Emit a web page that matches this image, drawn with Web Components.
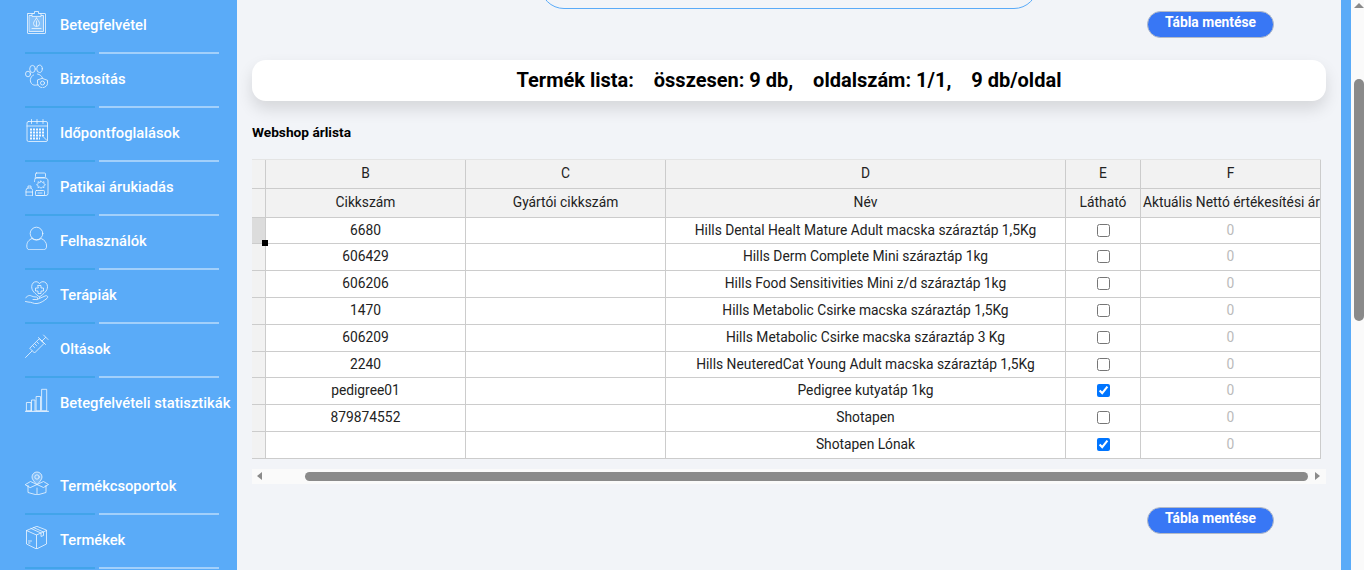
<!DOCTYPE html>
<html lang="hu"><head><meta charset="utf-8"><title>Webshop árlista</title>
<style>
html,body{margin:0;padding:0;height:570px;overflow:hidden;background:#f2f4f8;font-family:Roboto,"Liberation Sans",sans-serif}
vet-app{height:570px}
</style></head><body>
<template id="icons">
<svg data-i="clip" viewBox="0 0 24 24"><rect x="2.500" y="3.500" width="18" height="20" rx=".5"/><rect x="4.500" y="5.500" width="14" height="16" fill="rgba(255,255,255,.28)"/><path d="M7 6V3.500h2.500V1.500h4v2H16V6z" fill="#5aabf8"/><path d="M11.500 8c1 2 3 3.500 3 5.500a3 3 0 0 1-6 0c0-2 2-3.500 3-5.500zM11.500 11v5M7 18.500h9"/></svg>
<svg data-i="paw" viewBox="0 0 24 24"><ellipse cx="3" cy="10" rx="2.500" ry="2.800"/><ellipse cx="7.500" cy="5" rx="2.800" ry="3.600"/><ellipse cx="14.500" cy="4.800" rx="2.800" ry="3.700"/><path d="M8.500 11C5 12.500 4 18 7.500 20.500c2 1.200 3.500 .5 5.500 .3M12.500 10c2.500 .5 4 1.700 5 4"/><path d="M17.500 14.500l5 1.800v3c0 2.500-2 3.700-5 4.700-3-1-5-2.200-5-4.700v-3z"/><circle cx="17.500" cy="19" r="2"/></svg>
<svg data-i="cal" viewBox="0 0 24 24"><rect x="2" y="3.500" width="20.500" height="20" rx="1.500"/><path d="M2 8h20.500M6.500 1.500v4M12 1.500v4M18 1.500v4"/><path d="M5 11.500h14.500M5 14.500h14.500M5 17.500h14.500M5 20.500h10" stroke-width="1.800" stroke-dasharray="2 1" stroke-linecap="butt"/><path d="M18.500 19l3 3"/></svg>
<svg data-i="pills" viewBox="0 0 24 24"><path d="M10 6h11c1.500 .5 2 1.500 2 3v12.500a2 2 0 0 1-2 2H11"/><rect x="10.500" y="1" width="10" height="4.500" rx="1"/><path d="M9.500 9.500c0-1.500 .5-3.500 1-3.500"/><path d="M16 9l1.200 1.500 1.800-.8-.2 2 1.700 1-1.700 1 .2 2-1.800-.8-1.200 1.500-1.200-1.500-1.800 .8 .2-2-1.700-1 1.700-1-.2-2 1.800 .8z" stroke-width=".7"/><rect x="10.500" y="18.500" width="9" height="5" rx="1"/><path d="M13 21h4M1 23.500v-5a2.500 2.500 0 0 1 2.500-2.500h1A2.500 2.500 0 0 1 7.500 18.500v5zM1 20h6.500M3 16v-2h3v2"/></svg>
<svg data-i="user" viewBox="0 0 24 24"><circle cx="11.500" cy="7.500" r="6.300"/><path d="M7 12.500C3.500 14 1.800 16.500 1.800 20c0 2.700 1 3.700 3 3.700h13.500c2 0 3.300-1 3.300-3.700 0-3.500-2-6-5.500-7.500-1.300 1-3 1.500-4.500 1.500S8.300 13.500 7 12.500z"/></svg>
<svg data-i="heart" viewBox="0 0 24 24"><path d="M14.500 17C10 13.500 6.700 11 6.700 6.700c0-3 2-5 4.300-5 1.500 0 2.700 .7 3.500 2 .8-1.300 2-2 3.500-2 2.300 0 4.500 2 4.500 5 0 4.300-3.500 6.800-8 10.300z"/><path d="M13 5.500h3V8h2.500v3H16v2.500h-3V11h-2.500V8H13z"/><path d="M.5 18c2-2.500 4-3 6-2 1.500 .8 3 1 5 1 1.500 0 1.500 2.500 0 2.500H8M12 19.500l8-3.500c2.500-1 3.500 1 2 2.300-3 2.500-6 4.700-10 5.200-3.500 .5-5-1.500-9-1.500L.5 21.500"/></svg>
<svg data-i="syr" viewBox="0 0 24 24"><path d="M.5 23.500l6.500-6.500M5 14.500l4.500 4.500 9.500-9.500L14.500 5zM8 12l1.500 1.500M10 10l1.500 1.500M12 8l1.500 1.500M13.500 3.500l7 7M17 7l3.500-3.500M18.500 1l4.500 4.500"/></svg>
<svg data-i="bars" viewBox="0 0 24 24"><path d="M.5 23.300h23" stroke-width="1"/><rect x="1.800" y="14.500" width="4.200" height="8.300"/><rect x="11.500" y="8.500" width="4" height="14.300"/><rect x="17" y="1.300" width="4.700" height="21.500"/><path d="M6.500 22.800V12h3.500v10.800"/></svg>
<svg data-i="pin" viewBox="0 0 24 24"><path d="M3 14.500v7l9 2.500 9-2.500v-7M12 17v7M.5 13.500l5-3 6.500 3 6.500-3 5 3-5 3-6.500-3-6.500 3z"/><path d="M12 13.500C9.500 11 7 8.500 7 6a5 5 0 0 1 10 0c0 2.500-2.500 5-5 7.500z" fill="#7dbcf9"/><circle cx="12" cy="6" r="2.200"/></svg>
<svg data-i="box" viewBox="0 0 24 24"><path d="M11.500 1.500L1.500 5.500v13.500l10 5 10-5V5.500zM1.500 5.500l10 4.500 10-4.500M11.500 10v14M6 3.500l10 4.500V11.500l2.500-1V7L8.500 2.500"/><path d="M3.500 16h3M3.500 18h1.500"/></svg>
</template>

<vet-app>
  <vet-side>
    <vet-item icon="clip">Betegfelvétel</vet-item>
    <vet-item icon="paw">Biztosítás</vet-item>
    <vet-item icon="cal">Időpontfoglalások</vet-item>
    <vet-item icon="pills">Patikai árukiadás</vet-item>
    <vet-item icon="user">Felhasználók</vet-item>
    <vet-item icon="heart">Terápiák</vet-item>
    <vet-item icon="syr">Oltások</vet-item>
    <vet-item icon="bars" plain>Betegfelvételi statisztikák</vet-item>
    <vet-item icon="pin" spaced>Termékcsoportok</vet-item>
    <vet-item icon="box">Termékek</vet-item>
  </vet-side>
  <vet-main>
    <vet-search></vet-search>
    <vet-save top>Tábla mentése</vet-save>
    <vet-panel>Termék lista:&nbsp;&nbsp;&nbsp;&nbsp;összesen: 9 db,&nbsp;&nbsp;&nbsp;&nbsp;oldalszám: 1/1,&nbsp;&nbsp;&nbsp;&nbsp;9 db/oldal</vet-panel>
    <vet-caption>Webshop árlista</vet-caption>
    <vet-grid></vet-grid>
    <vet-hbar></vet-hbar>
    <vet-save>Tábla mentése</vet-save>
  </vet-main>
  <vet-vbar></vet-vbar>
</vet-app>

<script>
function comp(name, css, html, init){
  customElements.define(name, class extends HTMLElement{
    constructor(){super();const r=this.attachShadow({mode:'open'});r.innerHTML='<style>'+css+'</style>'+html;}
    connectedCallback(){ if(init) init.call(this,this.shadowRoot); }
  });
}
comp('vet-app',':host{display:flex;width:1364px;overflow:hidden}','<slot></slot>');
comp('vet-side',':host{display:block;width:237px;flex:none;background:#5aabf8;height:570px;overflow:hidden}','<slot></slot>');
comp('vet-item',`:host{display:block;height:54px;color:#fff;font-size:14.75px;font-weight:500;white-space:nowrap}
:host([spaced]){margin-top:29px}
.row{height:50px;padding-bottom:2px;display:flex;align-items:center;padding-left:25px;gap:11px}
.ic{width:24px;height:24px;display:block;flex:none;margin-bottom:6px}
svg{width:24px;height:24px;display:block;fill:none;stroke:#fff;stroke-width:.8;stroke-linejoin:round;stroke-linecap:round;opacity:.92}
.div{display:flex;gap:4px;padding-left:25px;height:2px}
.a{width:70px;background:#42a4ea}.b{width:120px;background:#a2d0fb}
:host([plain]) .div{visibility:hidden}`,
`<div class="row"><span class="ic"></span><span><slot></slot></span></div><div class="div"><div class="a"></div><div class="b"></div></div>`,
function(r){const s=document.getElementById('icons').content.querySelector('[data-i="'+this.getAttribute('icon')+'"]');
 const ic=r.querySelector('.ic'); if(!ic.firstChild) ic.appendChild(s.cloneNode(true));});
comp('vet-main',':host{flex:1;min-width:0;display:block;padding:0 15px;height:570px;overflow:hidden;box-sizing:border-box}','<slot></slot>');
comp('vet-search',':host{display:block;width:498px;height:60px;margin:-51px 0 0 288px;border:1px solid #5aabf8;border-radius:24px;box-sizing:border-box}','');
comp('vet-save',`:host{display:block;width:127px;height:27px;margin:23px 0 0 895px;box-sizing:border-box;border-radius:14px;background:#3877f5;border:1px solid #b4bac6;color:#fff;font-size:13.8px;font-weight:700;text-align:center;line-height:21px}
:host([top]){margin-top:2px}`,'<slot></slot>');
comp('vet-panel',`:host{display:block;height:41px;margin-top:22px;border-radius:14px;background:#fff;box-shadow:0 8px 16px rgba(0,0,0,.12);text-align:center;font-size:20px;font-weight:700;color:#000;line-height:41px;white-space:nowrap}`,'<slot></slot>');
comp('vet-caption',':host{display:block;margin-top:23px;font-size:13.7px;font-weight:700;color:#000;line-height:16px;height:16px}','<slot></slot>');
const rows=[['6680','Hills Dental Healt Mature Adult macska száraztáp 1,5Kg',0],['606429','Hills Derm Complete Mini száraztáp 1kg',0],['606206','Hills Food Sensitivities Mini z/d száraztáp 1kg',0],['1470','Hills Metabolic Csirke macska száraztáp 1,5Kg',0],['606209','Hills Metabolic Csirke macska száraztáp 3 Kg',0],['2240','Hills NeuteredCat Young Adult macska száraztáp 1,5Kg',0],['pedigree01','Pedigree kutyatáp 1kg',1],['879874552','Shotapen',0],['','Shotapen Lónak',1]];
comp('vet-grid',`:host{display:block;margin-top:19px;position:relative;width:1069px;height:300px;font-size:13.8px;color:#222}
.g{display:grid;grid-template-columns:14px 200px 200px 400px 75px 180px;grid-template-rows:29px 29px 26px 27px 27px 27px 27px 26px 27px 27px 27px;border-top:1px solid #e4e4e4;box-sizing:border-box}
.c{box-sizing:border-box;border-right:1px solid #ccc;border-bottom:1px solid #ccc;background:#fff;display:flex;align-items:center;justify-content:center;white-space:nowrap;overflow:hidden;min-width:0;padding-bottom:2px}
.h{background:#f2f2f2}.rh{background:#f2f2f2}.sel{background:#dcdcdc}
.lc{justify-content:flex-start;padding-left:2px}.z{color:#bbb}
.ck{padding-bottom:1px}
input{margin:0;width:13px;height:13px;display:block}
.hnd{position:absolute;left:10px;top:81px;width:6px;height:6px;background:#000;border:0}`,
`<div class="g"></div><div class="hnd"></div>`,
function(r){const g=r.querySelector('.g'); if(g.firstChild) return;let h='';
 h+='<div class="c h"></div>'+['B','C','D','E','F'].map(x=>'<div class="c h">'+x+'</div>').join('');
 h+='<div class="c h"></div><div class="c h">Cikkszám</div><div class="c h">Gyártói cikkszám</div><div class="c h">Név</div><div class="c h">Látható</div><div class="c h lc">Aktuális Nettó értékesítési ár</div>';
 rows.forEach((w,i)=>{h+='<div class="c rh'+(i==0?' sel':'')+'"></div><div class="c">'+w[0]+'</div><div class="c"></div><div class="c">'+w[1]+'</div><div class="c ck"><input type="checkbox"'+(w[2]?' checked':'')+'></div><div class="c z">0</div>';});
 g.innerHTML=h;});
comp('vet-hbar',`:host{display:flex;align-items:center;height:15px;margin-top:10px;background:#fafafa;position:relative}
.t{position:absolute;left:53px;width:1003px;top:3px;height:9px;border-radius:5px;background:#8a8a8a}
.l,.r{position:absolute;top:3px;width:0;height:0;border:5px solid transparent}
.l{left:0;border-left:0;border-right:5px solid #8a8a8a;margin-left:5px;border-top-width:4.5px;border-bottom-width:4.500px}
.r{right:6px;border-right:0;border-left:5px solid #8a8a8a;border-top-width:4.5px;border-bottom-width:4.5px}`,
`<div class="l"></div><div class="t"></div><div class="r"></div>`);
comp('vet-vbar',`:host{display:block;flex:none;width:23px;height:570px;position:relative;box-sizing:border-box;border-left:10px solid #5aabf8;background:#fafafa}
.t{position:absolute;left:3px;right:0;top:79px;height:242px;background:#8a8a8a;border-radius:5px}
.u{position:absolute;left:3px;top:3px;width:0;height:0;border:5px solid transparent;border-top:0;border-bottom:5px solid #8a8a8a}`,
`<div class="u"></div><div class="t"></div>`);
</script>
</body></html>
